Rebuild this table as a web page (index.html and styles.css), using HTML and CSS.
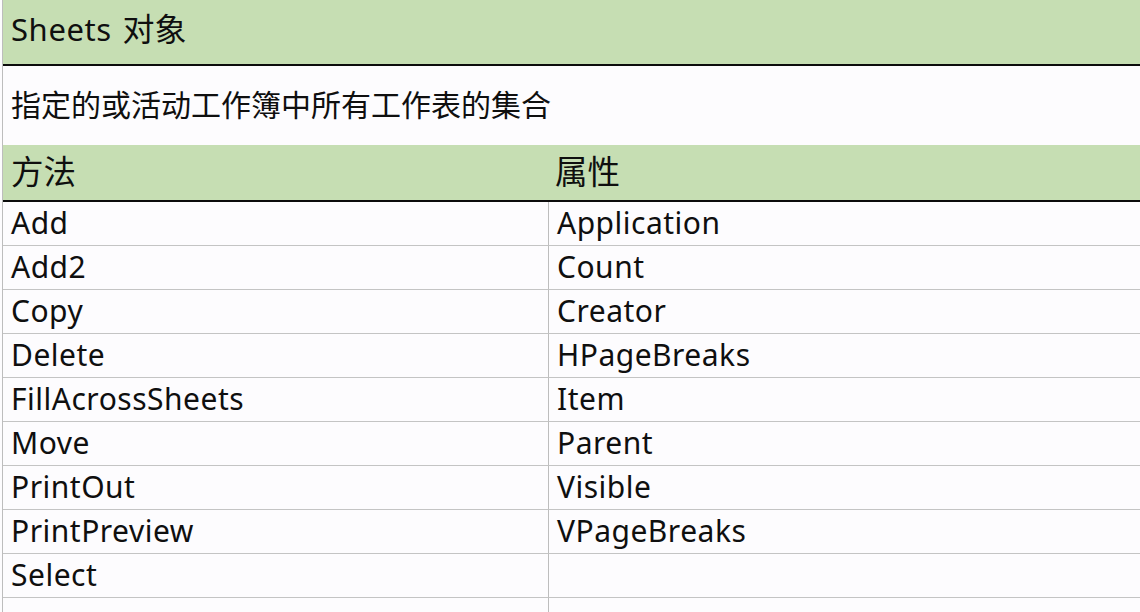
FILE: index.html
```html
<!DOCTYPE html>
<html lang="zh-CN">
<head>
<meta charset="utf-8">
<title>Sheets 对象</title>
<link rel="stylesheet" href="styles.css">
</head>
<body>
<div class="sheet">
  <div class="title">Sheets <span class="cjk">对象</span></div>
  <div class="desc">指定的或活动工作簿中所有工作表的集合</div>
  <div class="grid">
    <div class="head">方法</div><div class="head col2">属性</div>
    <div class="cell">Add</div><div class="cell col2">Application</div>
    <div class="cell">Add2</div><div class="cell col2">Count</div>
    <div class="cell">Copy</div><div class="cell col2">Creator</div>
    <div class="cell">Delete</div><div class="cell col2">HPageBreaks</div>
    <div class="cell">FillAcrossSheets</div><div class="cell col2">Item</div>
    <div class="cell">Move</div><div class="cell col2">Parent</div>
    <div class="cell">PrintOut</div><div class="cell col2">Visible</div>
    <div class="cell">PrintPreview</div><div class="cell col2">VPageBreaks</div>
    <div class="cell">Select</div><div class="cell col2"></div>
    <div class="cell"></div><div class="cell col2"></div>
  </div>
</div>
</body>
</html>
```
FILE: styles.css
```css
html, body {
  margin: 0;
  padding: 0;
  background: #fdfcfe;
  overflow: hidden;
}
body {
  width: 1140px;
  height: 612px;
  font-family: "Noto Sans", "Noto Sans CJK SC", sans-serif;
  color: #0f0f0f;
}
.sheet {
  margin-left: 2px;
  border-left: 1px solid #bdbdbd;
}
.title {
  box-sizing: border-box;
  height: 66px;
  background: #c6deb3;
  border-bottom: 2px solid #0c0c0c;
  font-size: 31px;
  letter-spacing: 0.6px;
  line-height: 58px;
  padding-left: 8px;
}
.title .cjk {
  font-size: 32px;
  letter-spacing: 0;
  margin-left: 2px;
}
.desc {
  height: 79px;
  font-size: 30px;
  line-height: 78px;
  padding-left: 8px;
}
.grid {
  display: grid;
  grid-template-columns: 545px 1fr;
}
.head {
  background: #c6deb3;
  height: 55px;
  border-bottom: 2px solid #0c0c0c;
  font-size: 32.5px;
  line-height: 54px;
  padding-left: 8px;
}
.head.col2 {
  padding-left: 7px;
}
.cell {
  height: 43px;
  border-bottom: 1px solid #c4c4c4;
  font-size: 30px;
  letter-spacing: 0.5px;
  line-height: 42px;
  padding-left: 8px;
}
.cell.col2 {
  border-left: 1px solid #bdbdbd;
}
```
